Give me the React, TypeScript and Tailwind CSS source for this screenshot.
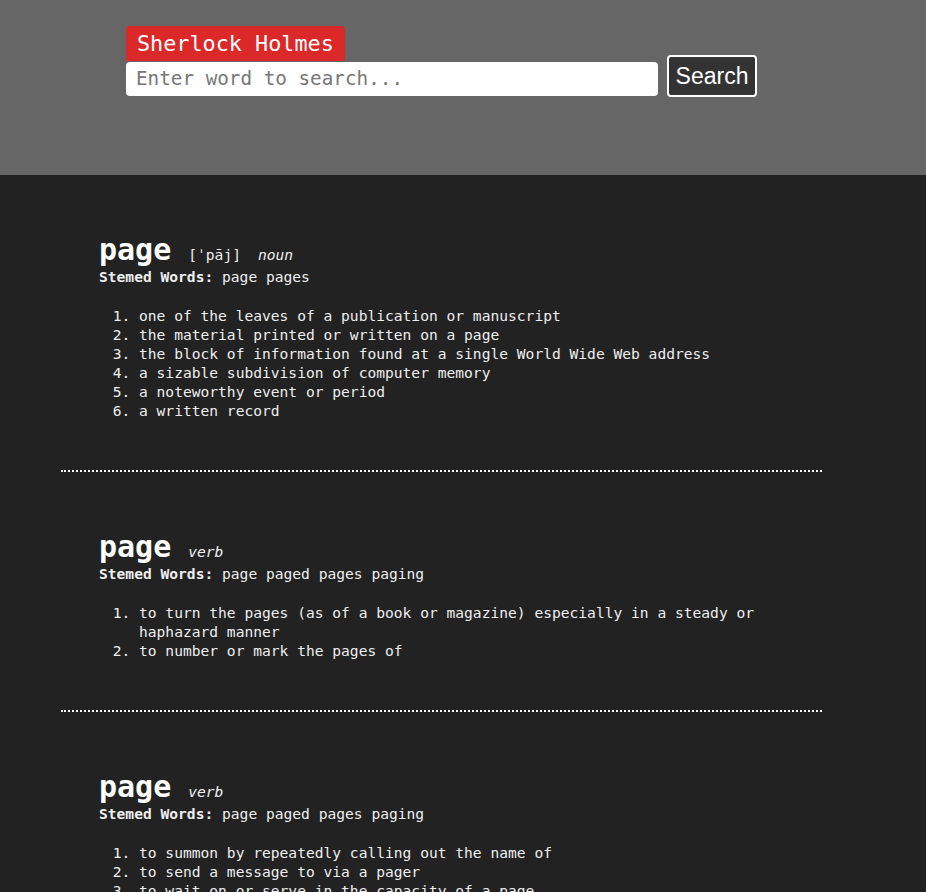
import React from 'react';

interface Entry {
  word: string;
  pron?: string;
  pos: string;
  stems: string;
  defs: string[];
}

const entries: Entry[] = [
  {
    word: 'page',
    pron: "[ˈpāj]",
    pos: 'noun',
    stems: 'page pages',
    defs: [
      'one of the leaves of a publication or manuscript',
      'the material printed or written on a page',
      'the block of information found at a single World Wide Web address',
      'a sizable subdivision of computer memory',
      'a noteworthy event or period',
      'a written record',
    ],
  },
  {
    word: 'page',
    pos: 'verb',
    stems: 'page paged pages paging',
    defs: [
      'to turn the pages (as of a book or magazine) especially in a steady or haphazard manner',
      'to number or mark the pages of',
    ],
  },
  {
    word: 'page',
    pos: 'verb',
    stems: 'page paged pages paging',
    defs: [
      'to summon by repeatedly calling out the name of',
      'to send a message to via a pager',
      'to wait on or serve in the capacity of a page',
    ],
  },
];

const mono = "font-['DejaVu_Sans_Mono',monospace]";

const EntryCard: React.FC<{ entry: Entry; last: boolean }> = ({ entry, last }) => {
  return (
    <div>
      <div className="pl-[38px] pt-[58px] pb-[50px]">
        <div className="flex items-baseline">
          <h1 className="text-[30px] leading-[34px] font-bold text-white">{entry.word}</h1>
          {entry.pron && (
            <span className="ml-[17px] text-[14.6px] text-[#eee]">{entry.pron}</span>
          )}
          <span className="ml-[17px] text-[14.6px] italic text-[#eee]">{entry.pos}</span>
        </div>
        <p className="text-[14.6px] leading-[19px] text-[#eee]">
          <span className="font-bold">Stemed Words:</span> {entry.stems}
        </p>
        <ol className="list-decimal pl-[40px] mt-[20px] text-[14.6px] leading-[19px] text-[#eee] w-[700px]">
          {entry.defs.map((d, i) => (
            <li key={i}>{d}</li>
          ))}
        </ol>
      </div>
      {!last && <div className="border-t-2 border-dotted border-white" />}
    </div>
  );
};

export default function App() {
  return (
    <div className={`min-h-screen bg-[#222] ${mono}`}>
      <div className="h-[175px] bg-[#666] pt-[26px] pl-[126px]">
        <div className="inline-block bg-[#db2828] rounded-t-[4px] px-[11px] h-[35px] text-[21.8px] leading-[35px] text-white">
          Sherlock Holmes
        </div>
        <div className="flex items-center gap-[9px] -mt-[1px]">
          <input
            className={`w-[532px] h-[34px] bg-white rounded-[4px] px-[10px] text-[19.3px] text-[#333] placeholder:text-[#777] outline-none ${mono}`}
            placeholder="Enter word to search..."
          />
          <button className="w-[90px] h-[42px] -mt-[5px] bg-[#333] border-2 border-white rounded-[4px] text-[23px] text-white font-['Liberation_Sans',Arial,sans-serif]">
            Search
          </button>
        </div>
      </div>
      <div className="ml-[61px] w-[761px]">
        {entries.map((e, i) => (
          <EntryCard key={i} entry={e} last={i === entries.length - 1} />
        ))}
      </div>
    </div>
  );
}
